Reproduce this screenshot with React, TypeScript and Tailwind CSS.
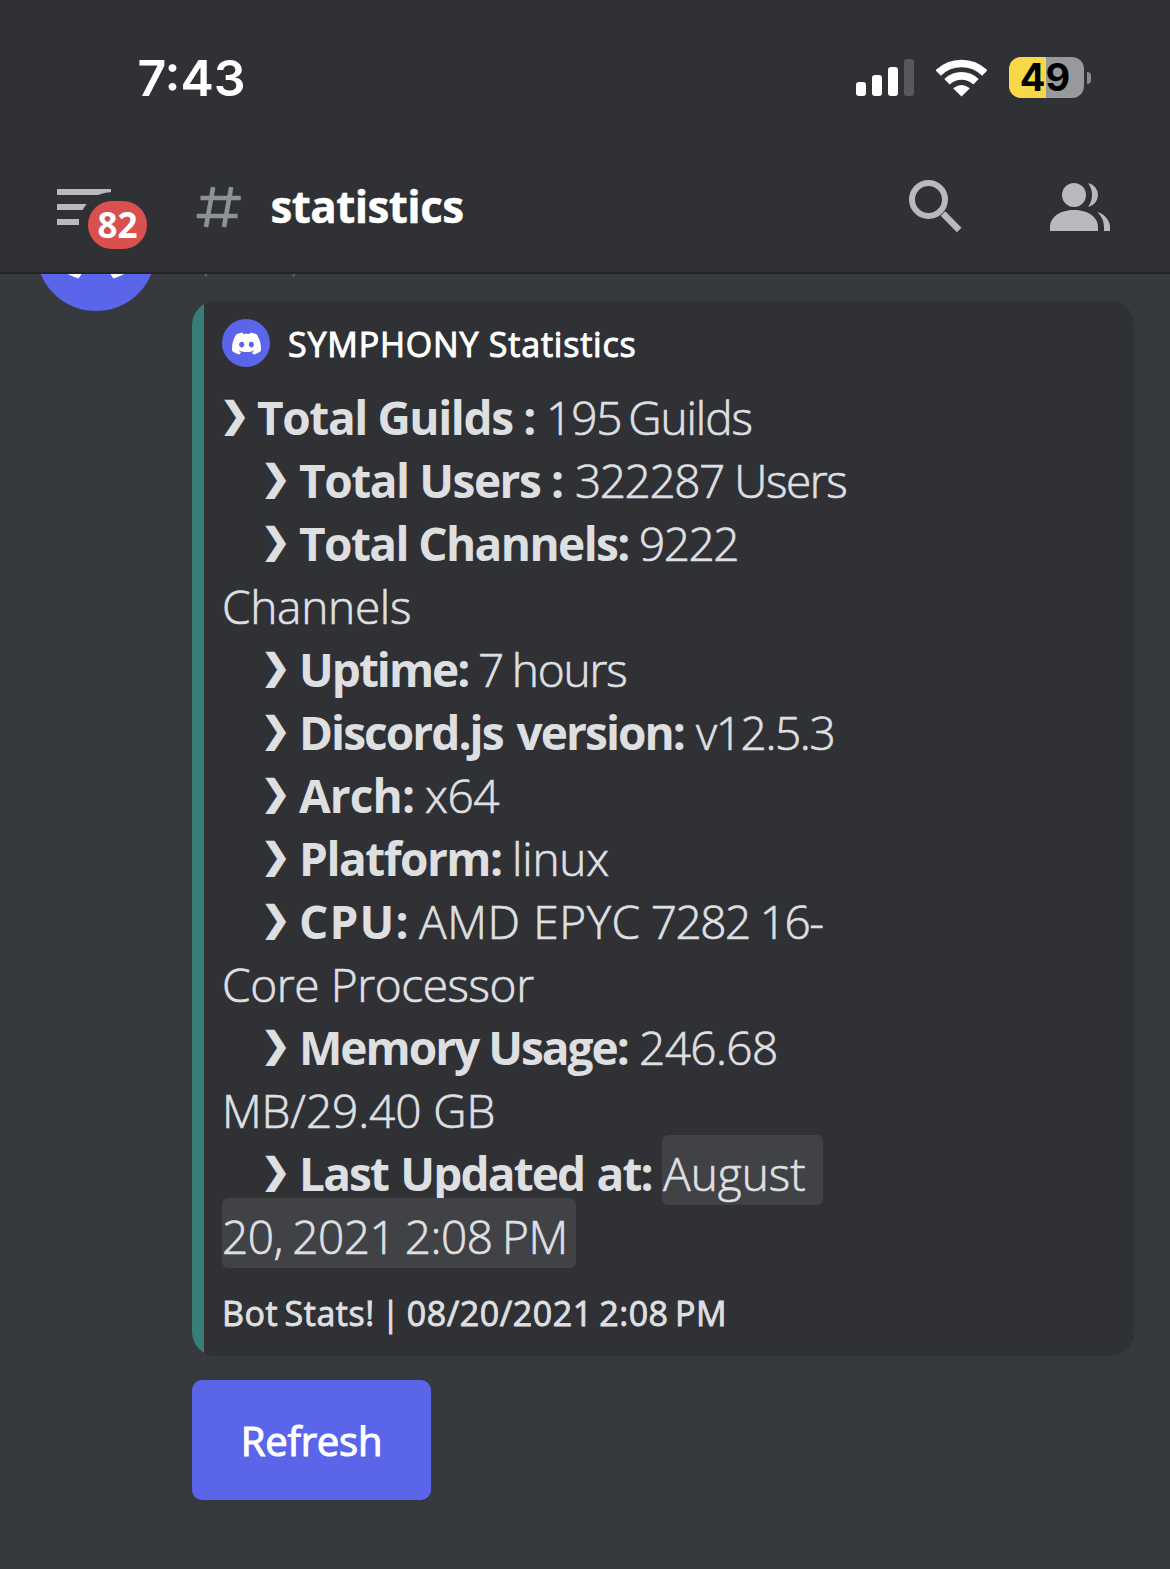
import React from "react";
import { SiDiscord } from "react-icons/si";

type Stat = {
  label: string;
  labelClass: string;
  value: React.ReactNode;
  valueClass: string;
  rest?: string;
  restClass?: string;
};

const stats: Stat[] = [
  { label: "Total Guilds :", labelClass: "w-[289px] tracking-[-1.4px]", value: "195 Guilds", valueClass: "tracking-[-1.1px] [word-spacing:-4px]" },
  { label: "Total Users :", labelClass: "ml-[1px] w-[276px] tracking-[-1.45px]", value: "322287 Users", valueClass: "tracking-[-1.45px]" },
  { label: "Total Channels:", labelClass: "ml-[1px] w-[340px] tracking-[-1.6px]", value: "9222", valueClass: "tracking-[-1.5px]", rest: "Channels", restClass: "tracking-[-0.3px]" },
  { label: "Uptime:", labelClass: "ml-[1px] w-[179px] tracking-[-2px]", value: "7 hours", valueClass: "tracking-[-1.2px] [word-spacing:-2px]" },
  { label: "Discord.js version:", labelClass: "ml-[1px] w-[397px] tracking-[-1.95px] [word-spacing:4px]", value: "v12.5.3", valueClass: "tracking-[-1.4px]" },
  { label: "Arch:", labelClass: "ml-[1px] w-[126px] tracking-[-0.9px]", value: "x64", valueClass: "tracking-[-0.5px]" },
  { label: "Platform:", labelClass: "ml-[1px] w-[213px] tracking-[-1.5px]", value: "linux", valueClass: "tracking-[-0.2px]" },
  {
    label: "CPU:",
    labelClass: "ml-[1px] w-[120px] tracking-[1.2px]",
    value: (
      <>
        <span className="tracking-[0.6px]">AMD EPYC</span>
        <span className="tracking-[-1.5px] [word-spacing:-0.5px]"> 7282 16-</span>
      </>
    ),
    valueClass: "",
    rest: "Core Processor",
    restClass: "tracking-[-0.4px]",
  },
  { label: "Memory Usage:", labelClass: "ml-[1px] w-[340px] tracking-[-2px]", value: "246.68", valueClass: "tracking-[-0.6px]", rest: "MB/29.40 GB", restClass: "tracking-[-0.1px]" },
];

function Chevron() {
  return (
    <span className="-ml-[2px] w-[37px] shrink-0 -translate-y-[4.5px] text-[35px] font-bold">❯</span>
  );
}

function StatusBar() {
  return (
    <div className="flex h-[155px] items-center pr-[79px] pl-[137.5px] text-white">
      <span className="font-['Inter',sans-serif] text-[50px] leading-[60px] font-semibold">7:43</span>
      <div className="ml-auto flex items-center">
        <div className="flex h-[38px] -translate-y-[1px] items-end gap-[6px]">
          <span className="h-[14px] w-[10px] rounded-[3px] bg-white" />
          <span className="h-[21px] w-[10px] rounded-[3px] bg-white" />
          <span className="h-[29px] w-[10px] rounded-[3px] bg-white" />
          <span className="h-[37px] w-[10px] rounded-[3px] bg-[#58595d]" />
        </div>
        <svg className="ml-[22px] h-[38px] w-[51px]" viewBox="0 0 51 38" fill="none">
          <path d="M2.2 14 A33.2 33.2 0 0 1 48.8 14" stroke="#fff" strokeWidth="7.6" />
          <path d="M11 22.8 A20.8 20.8 0 0 1 40 22.8" stroke="#fff" strokeWidth="7.6" />
          <path d="M25.5 37.5 L17.6 29.8 Q17.2 29.2 17.9 28.7 Q25.5 23.4 33.1 28.7 Q33.8 29.2 33.4 29.8 Z" fill="#fff" />
        </svg>
        <div className="ml-[22px] flex h-[41px] w-[75px] items-center justify-center rounded-[12px] bg-linear-to-r from-[#f8d749] from-[37px] to-[#98999b] to-[37px] pr-[3px] font-['Inter',sans-serif] text-[38px] leading-[41px] font-bold text-black">
          49
        </div>
        <span className="ml-[3px] h-[12px] w-[4px] rounded-r-full bg-[#8a8b8e]" />
      </div>
    </div>
  );
}

function ChannelBar() {
  return (
    <div className="flex h-[117px] items-start pr-[60px] pl-[57px]">
      <div className="relative mt-[34px] flex h-[36px] w-[90px] flex-col gap-[9px]">
        <span className="h-[6px] w-[54px] bg-[#b9babd]" />
        <span className="h-[6px] w-[30px] bg-[#b9babd]" />
        <span className="h-[6px] w-[22px] bg-[#b9babd]" />
        <span className="absolute top-[12px] left-[31px] flex h-[48px] w-[59px] items-center justify-center rounded-full bg-[#da504e] text-[35px] leading-[48px] font-bold text-white ring-[9px] ring-[#303135]">
          82
        </span>
      </div>
      <svg className="mt-[31px] ml-[49px] h-[42px] w-[46px]" viewBox="0 0 46 42" fill="none" stroke="#8e9196" strokeWidth="4.6">
        <path d="M17.2 1.2 L10 41 M35.2 1.2 L28 41 M4.5 12 H44.8 M0.8 30 H41.6" />
      </svg>
      <h1 className="mt-[21px] ml-[28.5px] text-[44px] leading-[60px] font-bold tracking-[-0.6px] text-white [-webkit-text-stroke:0.4px]">statistics</h1>
      <svg className="mt-[25px] ml-auto h-[53px] w-[54px]" viewBox="0 0 54 53" fill="none" stroke="#b9babd" strokeWidth="6">
        <circle cx="20.5" cy="19.5" r="16.5" />
        <path d="M35 33.5 L51.2 50" strokeWidth="6.4" />
      </svg>
      <svg className="mt-[28px] ml-[88px] h-[48px] w-[60px]" viewBox="0 0 60 48" fill="#b9babd">
        <circle cx="24" cy="12" r="12" />
        <path d="M0 48 V44 C0 33.5 11 27 24 27 S48 33.5 48 44 V48 Z" />
        <path d="M38 0 A12.2 12.2 0 0 1 38 24 A20 20 0 0 0 38 0 Z" />
        <path d="M47.2 28.8 C55 31.5 60 37.5 60 44 V48 H54 V44 C54 38 51.5 33.2 47.2 28.8 Z" />
      </svg>
    </div>
  );
}

function StatLines({ stat, first }: { stat: Stat; first: boolean }) {
  return (
    <>
      <div className={first ? "flex h-[63px]" : "flex h-[63px] pl-[41px]"}>
        <Chevron />
        <strong className={`shrink-0 font-bold ${stat.labelClass}`}>{stat.label}</strong>
        <span className={`[-webkit-text-stroke:0.7px] ${stat.valueClass}`}>{stat.value}</span>
      </div>
      {stat.rest && <div className={`h-[63px] [-webkit-text-stroke:0.7px] ${stat.restClass}`}>{stat.rest}</div>}
    </>
  );
}

function Embed() {
  return (
    <article className="mt-[24px] flex h-[1055px] w-[942px] overflow-hidden rounded-[24px] bg-[#303135]">
      <div className="w-[12px] shrink-0 bg-[#377d78]" />
      <div className="flex-1 pt-[18px] pl-[18px] text-[#dedfe0]">
        <div className="flex h-[48px] items-center gap-[18px]">
          <span className="flex size-[48px] items-center justify-center rounded-full bg-[#5b65ea]">
            <SiDiscord className="size-[29px] text-white" />
          </span>
          <span className="pt-[2px] text-[34px] leading-[48px] tracking-[0.8px] text-white [-webkit-text-stroke:1px]">SYMPHONY Statistics</span>
        </div>
        <div className="mt-[19px] text-[46px] leading-[63px] font-light whitespace-nowrap">
          {stats.map((s, i) => (
            <StatLines key={s.label} stat={s} first={i === 0} />
          ))}
          <div className="flex h-[63px] pl-[41px]">
            <Chevron />
            <strong className="ml-[1px] w-[363px] shrink-0 font-bold tracking-[-1.85px] [word-spacing:2px]">Last Updated at:</strong>
            <span className="-mt-[7px] h-[70px] w-[161px] rounded-[6px] bg-[#414246] pt-[7px] pl-[1px] [-webkit-text-stroke:0.7px]">August</span>
          </div>
          <div className="relative -mt-[7px] h-[70px] w-[354px] rounded-[6px] bg-[#414246] pt-[7px] tracking-[-0.5px] [word-spacing:-2px] [-webkit-text-stroke:0.7px]">
            20, 2021 2:08 PM
          </div>
        </div>
        <footer className="mt-[22px] text-[34px] leading-[46px] tracking-[0.55px] [word-spacing:-3px] [-webkit-text-stroke:0.9px]">
          Bot Stats! | 08/20/2021 2:08 PM
        </footer>
      </div>
    </article>
  );
}

export default function App() {
  return (
    <div className="flex h-[1569px] w-[1170px] flex-col overflow-hidden bg-[#36393e] font-['Open_Sans',sans-serif]">
      <header className="h-[274px] shrink-0 border-b-2 border-[#222327] bg-[#303135]">
        <StatusBar />
        <ChannelBar />
      </header>
      <main className="flex-1 overflow-hidden">
        <div className="-mt-[83px] flex gap-[36px] pl-[36px]">
          <div className="flex size-[120px] shrink-0 items-center justify-center rounded-full bg-[#5b65ea]">
            <SiDiscord className="size-[72px] text-white" />
          </div>
          <div className="pt-[56px]">
            <div className="ml-[9px] h-[30px] text-[26px] leading-[30px] tracking-[0.8px] text-[#5f6267]">(edited)</div>
            <Embed />
            <button className="mt-[24px] h-[120px] w-[239px] rounded-[10px] bg-[#5b65ea] pt-[2px] text-[40px] tracking-[-0.2px] text-white [-webkit-text-stroke:1.1px]">
              Refresh
            </button>
          </div>
        </div>
      </main>
    </div>
  );
}
